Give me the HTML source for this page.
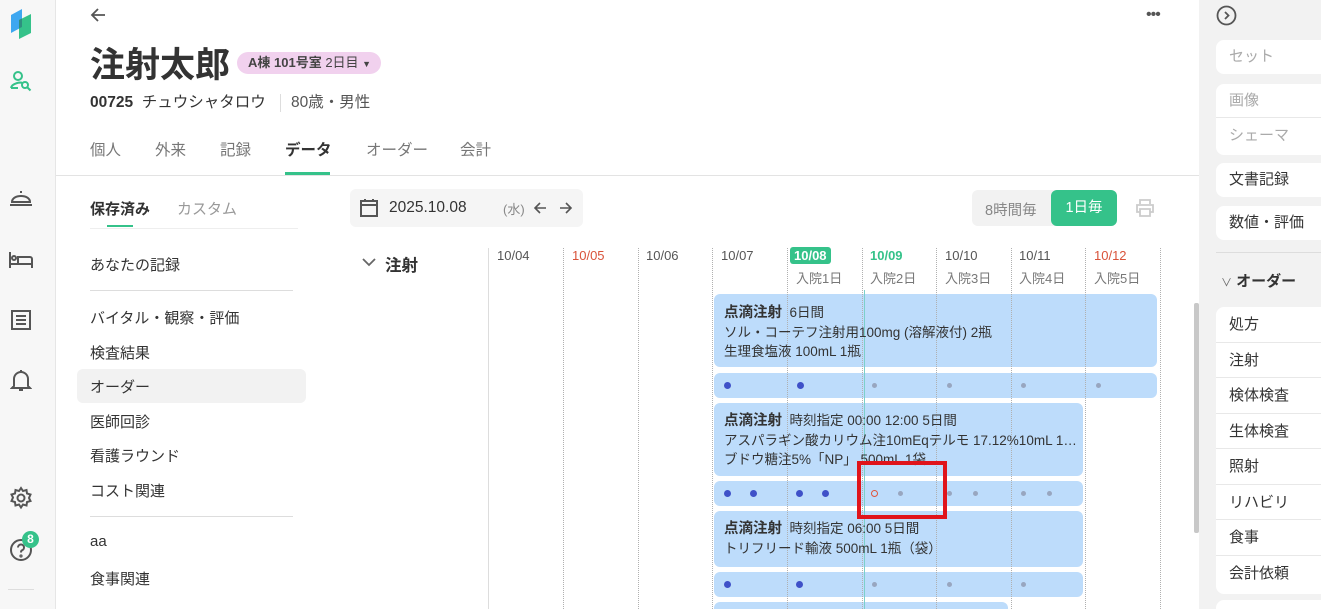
<!DOCTYPE html>
<html><head><meta charset="utf-8">
<style>
*{box-sizing:border-box;margin:0;padding:0}
html,body{width:1321px;height:609px;overflow:hidden}
body{position:relative;background:#fff;font-family:"Liberation Sans","Noto Sans CJK JP",sans-serif;color:#333}
.a{position:absolute;white-space:nowrap}
.side{left:0;top:0;width:56px;height:609px;background:#f7f7f7;border-right:1px solid #e6e6e6}
.rp{left:1199px;top:0;width:122px;height:609px;background:#f2f2f2;overflow:hidden}
.box{position:absolute;left:17px;width:120px;background:#fff;border-radius:8px;white-space:nowrap;overflow:hidden}
.row{height:35.5px;line-height:35.5px;padding-left:13px;font-size:15px;color:#333;border-bottom:1px solid #e8e8e8}
.nav{left:90px;font-size:15px;color:#333}
.dl{position:absolute;top:248px;height:361px;width:0;border-left:1px dotted #b0b0b0;z-index:3}
.card{position:absolute;background:#bddcfb;border-radius:6px}
.dot{position:absolute;border-radius:50%;z-index:4}
.big{width:7px;height:7px;background:#3f51c8}
.sm{width:5px;height:5px;background:#98a6bf}
.dh{position:absolute;top:248px;font-size:13px;color:#555}
.ds{position:absolute;top:268px;font-size:13px;color:#777}
.ct{position:absolute;left:724px;font-size:13.5px;line-height:19px;color:#333;z-index:5;white-space:nowrap}
</style></head><body>
<div class="a side">
 <svg class="a" style="left:10px;top:7px" width="22" height="34" viewBox="0 0 22 34"><path d="M1 8 L12 2 V20 L1 26Z" fill="#3ea7f0"/><path d="M9 13 L21 7 V26 L9 32Z" fill="#35c28a"/><path d="M9 13 L12 11.5 V20 L9 21.5Z" fill="#2f8e80"/></svg>
 <svg class="a" style="left:9px;top:70px" width="24" height="22" viewBox="0 0 24 22" fill="none" stroke="#35c28a" stroke-width="2"><circle cx="9" cy="6" r="4"/><path d="M2 18 C3 13 12 12 13 13"/><path d="M2 18h7"/><circle cx="16" cy="15" r="3"/><path d="M18.5 17.5l3 3"/></svg>
 <svg class="a" style="left:9px;top:188px" width="24" height="20" viewBox="0 0 24 20" fill="none" stroke="#555" stroke-width="2"><path d="M3 14 C3 6 21 6 21 14Z"/><path d="M1 17h22"/><path d="M12 5V3"/></svg>
 <svg class="a" style="left:8px;top:250px" width="26" height="20" viewBox="0 0 26 20" fill="none" stroke="#555" stroke-width="2"><path d="M2 2v16M2 14h22v4M10 14V7h12a2 2 0 0 1 2 2v5"/><circle cx="6" cy="8" r="2"/></svg>
 <svg class="a" style="left:10px;top:309px" width="22" height="22" viewBox="0 0 22 22" fill="none" stroke="#555" stroke-width="2"><rect x="2" y="2" width="18" height="18"/><path d="M6 7h10M6 11h10M6 15h10"/></svg>
 <svg class="a" style="left:10px;top:369px" width="22" height="24" viewBox="0 0 22 24" fill="none" stroke="#555" stroke-width="2"><path d="M4 17V10a7 7 0 0 1 14 0v7l2 2H2z"/><path d="M11 1v2M9 21h4"/></svg>
 <svg class="a" style="left:9px;top:486px" width="24" height="24" viewBox="0 0 24 24" fill="none" stroke="#555" stroke-width="2"><circle cx="12" cy="12" r="3.5"/><path d="M12 2l2 3 3.5-1 .5 3.5 3.5 1-1.5 3.5 1.5 3-3.5 1-.5 3.5-3.5-1-2 3-2-3-3.5 1-.5-3.5-3.5-1 1.5-3.5-1.5-3 3.5-1 .5-3.5 3.5 1z"/></svg>
 <svg class="a" style="left:9px;top:538px" width="24" height="24" viewBox="0 0 24 24" fill="none" stroke="#555" stroke-width="2"><circle cx="12" cy="12" r="10"/><path d="M9 9.5a3 3 0 1 1 4 2.8c-1 .5-1 1-1 2.2"/><circle cx="12" cy="18" r=".6"/></svg>
 <div class="a" style="left:22px;top:531px;width:17px;height:17px;border-radius:50%;background:#35c28a;color:#fff;font-size:12px;font-weight:bold;text-align:center;line-height:17px">8</div>
 <div class="a" style="left:8px;top:589px;width:26px;border-top:1px solid #ddd"></div>
</div>

<svg class="a" style="left:89px;top:6px" width="18" height="18" viewBox="0 0 18 18" fill="none" stroke="#555" stroke-width="1.8"><path d="M16 9H3M9 3L3 9l6 6"/></svg>
<div class="a" style="left:1146px;top:6px;font-size:16px;color:#555;letter-spacing:-1px">•••</div>
<div class="a" style="left:90px;top:42px;font-size:35px;font-weight:bold;color:#333;line-height:48px">注射太郎</div>
<div class="a" style="left:237px;top:52px;width:144px;height:22px;border-radius:11px;background:#f1d1ee;font-size:13px;font-weight:bold;color:#444;line-height:22px;padding-left:11px">A棟 101号室 <span style="font-weight:normal">2日目</span> <span style="font-size:9px">▼</span></div>
<div class="a" style="left:90px;top:92px;font-size:15.5px;line-height:22px;color:#333"><b>00725</b>&nbsp; チュウシャタロウ <span style="display:inline-block;width:1px;height:18px;background:#ddd;vertical-align:middle;margin:0 10px"></span><span style="color:#555">80歳・男性</span></div>
<div class="a" style="left:90px;top:140px;font-size:15.5px;color:#777;line-height:22px">
 <span style="position:absolute;left:0">個人</span><span style="position:absolute;left:65px">外来</span><span style="position:absolute;left:130px">記録</span><span style="position:absolute;left:195px;color:#333;font-weight:bold">データ</span><span style="position:absolute;left:276px">オーダー</span><span style="position:absolute;left:370px">会計</span></div>
<div class="a" style="left:285px;top:172px;width:45px;height:3px;background:#35c28a"></div>
<div class="a" style="left:56px;top:175px;width:1143px;border-top:1px solid #e3e3e3"></div>

<div class="a" style="left:90px;top:198px;font-size:15px;font-weight:bold;color:#333">保存済み</div>
<div class="a" style="left:177px;top:198px;font-size:15px;color:#999">カスタム</div>
<div class="a" style="left:107px;top:225px;width:26px;height:2px;background:#35c28a"></div>
<div class="a" style="left:90px;top:228px;width:208px;border-top:1px solid #eee"></div>
<div class="a nav" style="top:254px">あなたの記録</div>
<div class="a" style="left:90px;top:290px;width:203px;border-top:1px solid #ddd"></div>
<div class="a nav" style="top:307px">バイタル・観察・評価</div>
<div class="a nav" style="top:342px">検査結果</div>
<div class="a" style="left:77px;top:369px;width:229px;height:34px;background:#f2f2f2;border-radius:6px"></div>
<div class="a nav" style="top:376px">オーダー</div>
<div class="a nav" style="top:411px">医師回診</div>
<div class="a nav" style="top:445px">看護ラウンド</div>
<div class="a nav" style="top:480px">コスト関連</div>
<div class="a" style="left:90px;top:516px;width:203px;border-top:1px solid #ddd"></div>
<div class="a nav" style="top:533px">aa</div>
<div class="a nav" style="top:568px">食事関連</div>

<div class="a" style="left:350px;top:189px;width:233px;height:38px;background:#f5f5f5;border-radius:6px"></div>
<svg class="a" style="left:359px;top:198px" width="20" height="20" viewBox="0 0 20 20" fill="none" stroke="#555" stroke-width="2"><rect x="2" y="3" width="16" height="15"/><path d="M2 7h16M6 1v3M14 1v3" /></svg>
<div class="a" style="left:389px;top:199px;font-size:15.5px;color:#333">2025.10.08</div>
<div class="a" style="left:503px;top:199px;font-size:13px;color:#888">(水)</div>
<svg class="a" style="left:533px;top:201px" width="14" height="14" viewBox="0 0 14 14" fill="none" stroke="#555" stroke-width="1.6"><path d="M13 7H2M7 2L2 7l5 5"/></svg>
<svg class="a" style="left:559px;top:201px" width="14" height="14" viewBox="0 0 14 14" fill="none" stroke="#555" stroke-width="1.6"><path d="M1 7h11M7 2l5 5-5 5"/></svg>
<div class="a" style="left:972px;top:190px;width:145px;height:36px;background:#f2f2f2;border-radius:6px"></div>
<div class="a" style="left:985px;top:199px;font-size:14.5px;color:#888">8時間毎</div>
<div class="a" style="left:1051px;top:190px;width:66px;height:36px;background:#35c28a;border-radius:6px;color:#fff;font-size:14.5px;text-align:center;line-height:36px">1日毎</div>
<svg class="a" style="left:1135px;top:199px" width="20" height="18" viewBox="0 0 20 18" fill="none" stroke="#ccc" stroke-width="1.8"><path d="M5 5V1h10v4M5 13H2V6h16v7h-3M5 10h10v7H5z"/></svg>

<svg class="a" style="left:362px;top:257px" width="14" height="10" viewBox="0 0 14 10" fill="none" stroke="#666" stroke-width="1.8"><path d="M1 2l6 6 6-6"/></svg>
<div class="a" style="left:385px;top:252px;font-size:16.5px;font-weight:bold;color:#333">注射</div>
<div class="a" style="left:488px;top:248px;width:1px;height:361px;background:#ddd"></div>
<div class="dh" style="left:497px">10/04</div>
<div class="dh" style="left:572px;color:#d9533a">10/05</div>
<div class="dh" style="left:646px">10/06</div>
<div class="dh" style="left:721px">10/07</div>
<div class="dh" style="left:790px;top:247px;background:#35c28a;color:#fff;font-weight:bold;border-radius:3px;padding:0 4px;line-height:17px;z-index:5">10/08</div>
<div class="dh" style="left:870px;color:#35c28a;font-weight:bold">10/09</div>
<div class="dh" style="left:945px">10/10</div>
<div class="dh" style="left:1019px">10/11</div>
<div class="dh" style="left:1094px;color:#d9533a">10/12</div>
<div class="ds" style="left:796px">入院1日</div>
<div class="ds" style="left:870px">入院2日</div>
<div class="ds" style="left:945px">入院3日</div>
<div class="ds" style="left:1019px">入院4日</div>
<div class="ds" style="left:1094px">入院5日</div>
<div class="dl" style="left:563px"></div><div class="dl" style="left:638px"></div><div class="dl" style="left:712px"></div><div class="dl" style="left:787px"></div><div class="dl" style="left:862px"></div><div class="dl" style="left:936px"></div><div class="dl" style="left:1011px"></div><div class="dl" style="left:1085px"></div><div class="dl" style="left:1160px"></div>
<div class="a" style="left:864px;top:290px;width:1px;height:319px;background:#7dd0cb;z-index:4"></div>

<div class="card" style="left:714px;top:294px;width:443px;height:73px"></div>
<div class="ct" style="top:303px"><b style="font-size:14.5px">点滴注射</b>&nbsp; 6日間<br>ソル・コーテフ注射用100mg (溶解液付) 2瓶<br>生理食塩液 100mL 1瓶</div>
<div class="card" style="left:714px;top:373px;width:443px;height:25px"></div>
<div class="card" style="left:714px;top:403px;width:369px;height:73px"></div>
<div class="ct" style="top:411px"><b style="font-size:14.5px">点滴注射</b>&nbsp; 時刻指定 00:00 12:00 5日間<br>アスパラギン酸カリウム注10mEqテルモ 17.12%10mL 1…<br>ブドウ糖注5%「NP」 500mL 1袋</div>
<div class="card" style="left:714px;top:481px;width:369px;height:25px"></div>
<div class="card" style="left:714px;top:511px;width:369px;height:56px"></div>
<div class="ct" style="top:519px"><b style="font-size:14.5px">点滴注射</b>&nbsp; 時刻指定 06:00 5日間<br>トリフリード輸液 500mL 1瓶（袋）</div>
<div class="card" style="left:714px;top:572px;width:369px;height:25px"></div>
<div class="card" style="left:714px;top:602px;width:294px;height:20px"></div>

<div class="dot big" style="left:724px;top:382px"></div><div class="dot big" style="left:797px;top:382px"></div>
<div class="dot sm" style="left:872px;top:383px"></div><div class="dot sm" style="left:947px;top:383px"></div><div class="dot sm" style="left:1021px;top:383px"></div><div class="dot sm" style="left:1096px;top:383px"></div>
<div class="dot big" style="left:724px;top:490px"></div><div class="dot big" style="left:750px;top:490px"></div><div class="dot big" style="left:796px;top:490px"></div><div class="dot big" style="left:822px;top:490px"></div>
<div class="dot" style="left:871px;top:490px;width:7px;height:7px;border:1.5px solid #e0553a"></div>
<div class="dot sm" style="left:898px;top:491px"></div><div class="dot sm" style="left:947px;top:491px"></div><div class="dot sm" style="left:973px;top:491px"></div><div class="dot sm" style="left:1021px;top:491px"></div><div class="dot sm" style="left:1047px;top:491px"></div>
<div class="dot big" style="left:724px;top:581px"></div><div class="dot big" style="left:796px;top:581px"></div>
<div class="dot sm" style="left:872px;top:582px"></div><div class="dot sm" style="left:947px;top:582px"></div><div class="dot sm" style="left:1021px;top:582px"></div>
<div class="a" style="left:857px;top:461px;width:90px;height:58px;border:4px solid #e0141b;z-index:6"></div>

<div class="a" style="left:1194px;top:303px;width:5px;height:230px;background:#c8c8c8;border-radius:2px"></div>

<div class="a rp">
 <svg class="a" style="left:17px;top:5px" width="21" height="21" viewBox="0 0 21 21" fill="none" stroke="#555" stroke-width="1.8"><circle cx="10.5" cy="10.5" r="9"/><path d="M9 7l3.5 3.5L9 14"/></svg>
 <div class="box" style="top:40px;height:34px"><div class="row" style="border:0;color:#aaa;height:34px;line-height:34px">セット</div></div>
 <div class="box" style="top:84px;height:71px"><div class="row" style="color:#aaa;height:34px;line-height:34px">画像</div><div class="row" style="color:#aaa;border:0;height:36px;line-height:36px">シェーマ</div></div>
 <div class="box" style="top:163px;height:34px"><div class="row" style="border:0;height:34px;line-height:34px">文書記録</div></div>
 <div class="box" style="top:206px;height:34px"><div class="row" style="border:0;height:34px;line-height:34px">数値・評価</div></div>
 <div class="a" style="left:17px;top:252px;width:105px;border-top:1px solid #ddd"></div>
 <div class="a" style="left:22px;top:270px;font-size:15px;font-weight:bold;color:#333"><span style="font-size:11px;color:#666;font-weight:normal">∨</span> オーダー</div>
 <div class="box" style="top:307px;height:287px">
  <div class="row">処方</div><div class="row">注射</div><div class="row">検体検査</div><div class="row">生体検査</div><div class="row">照射</div><div class="row">リハビリ</div><div class="row">食事</div><div class="row" style="border:0">会計依頼</div>
 </div>
 <div class="box" style="top:600px;height:20px"></div>
</div>
</body></html>
